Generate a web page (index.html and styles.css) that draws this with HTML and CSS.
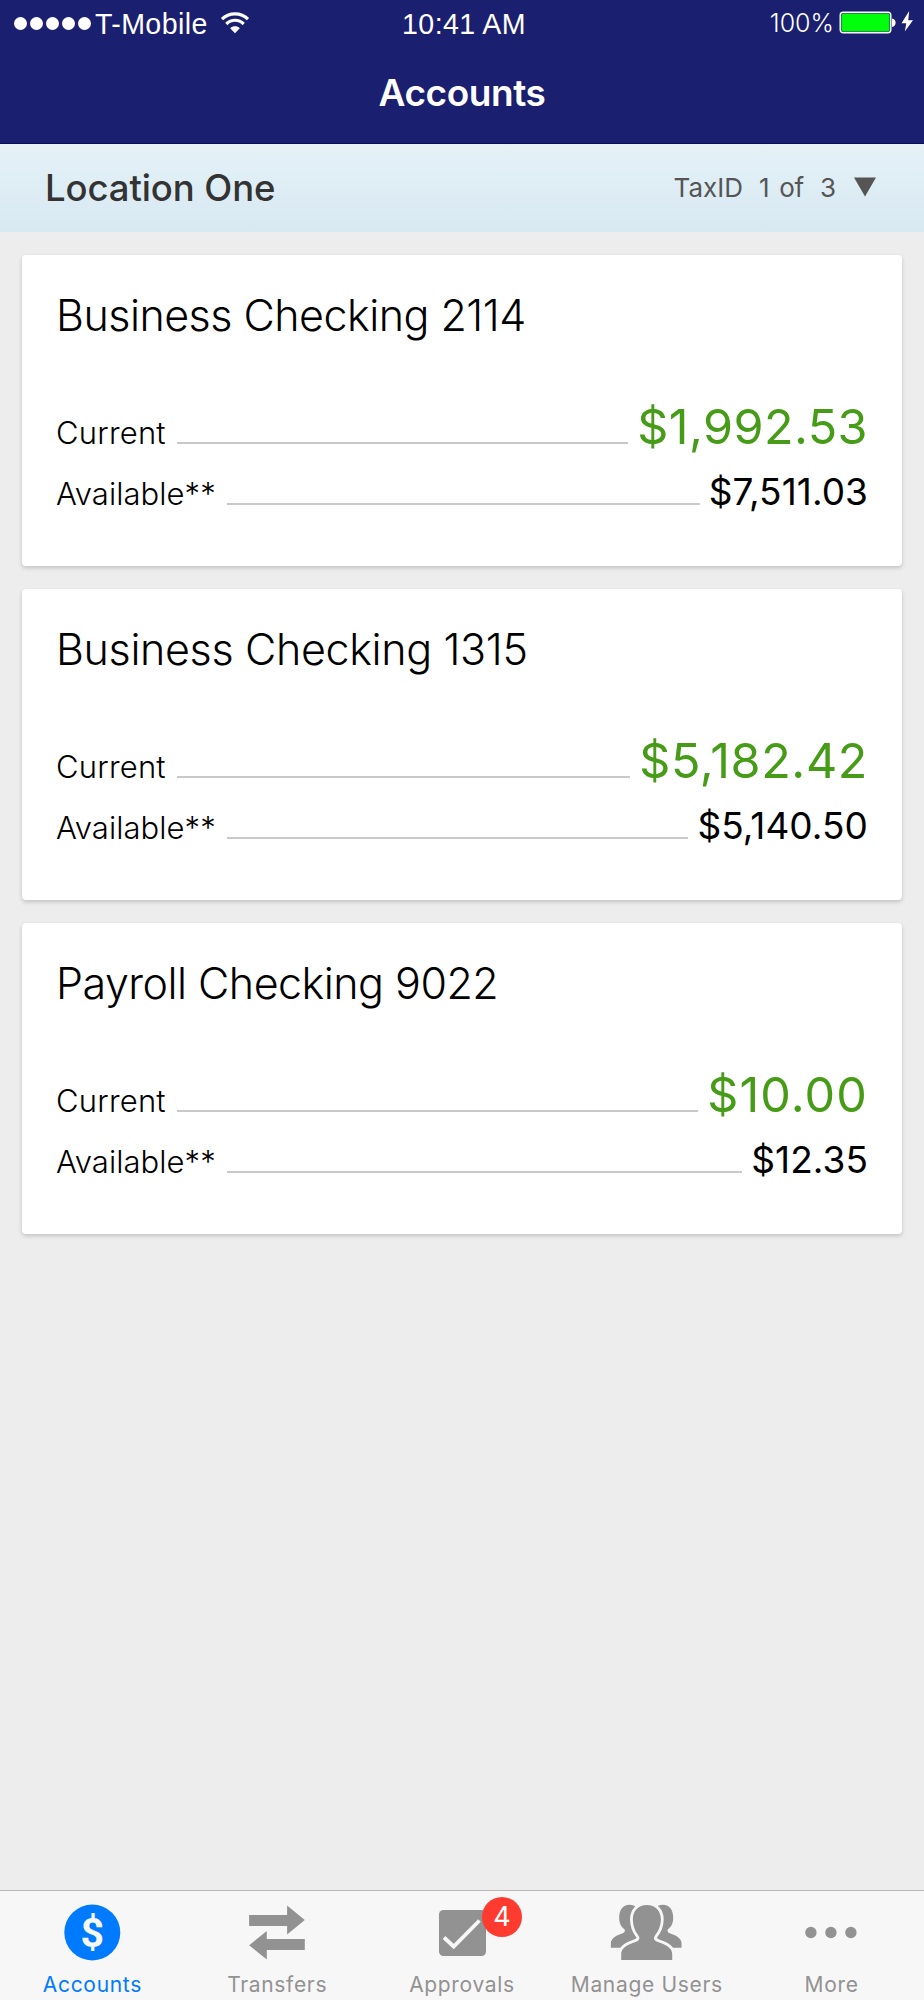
FILE: index.html
```html
<!DOCTYPE html>
<html lang="en">
<head>
<meta charset="utf-8">
<title>Accounts</title>
<link rel="stylesheet" href="styles.css">
</head>
<body>
<div class="app">
  <header class="header">
    <div class="status">
      <div class="status-left">
        <div class="signal"><i></i><i></i><i></i><i></i><i></i></div>
        <span class="carrier">T-Mobile</span>
        <svg class="wifi" width="30" height="24" viewBox="0 0 30 24" fill="none" stroke="#fff" stroke-width="3.2">
          <path d="M2 8.2C9 1 21 1 28 8.2"/>
          <path d="M6.3 13C11.3 8 18.7 8 23.7 13"/>
          <path d="M10.2 17.2C12.8 14.6 17.2 14.6 19.8 17.2L15 22.2Z" fill="#fff" stroke="none"/>
        </svg>
      </div>
      <div class="clock">10:41 AM</div>
      <div class="status-right">
        <span class="percent">100%</span>
        <svg class="battery" width="76" height="26" viewBox="0 0 76 26">
          <rect x="1.2" y="2.2" width="50.6" height="20.6" rx="3" fill="none" stroke="#fff" stroke-width="1.4"/>
          <rect x="2.6" y="3.6" width="47.8" height="17.8" rx="1.5" fill="#00ff0a" stroke="#2b9447" stroke-width="0.8"/>
          <path d="M53 8.500C57.800 9 57.800 16.500 53 17Z" fill="#fff"/>
          <path d="M70.200 1L62.500 13.200H67.300L65.800 21.500L74 10.300H69.200Z" fill="#fff"/>
        </svg>
      </div>
    </div>
    <h1 class="title">Accounts</h1>
  </header>

  <section class="location">
    <h2 class="location-name">Location One</h2>
    <div class="tax"><span>TaxID</span><span class="position">1 of</span><span>3</span>
      <svg width="22" height="20" viewBox="0 0 22 20"><path d="M0 .5H22L11 19.500Z" fill="#555"/></svg>
    </div>
  </section>

  <main class="cards">
    <article class="card">
      <h3 class="card-title">Business Checking 2114</h3>
      <div class="row current"><span class="label">Current</span><span class="rule"></span><span class="amount snug">$1,992.53</span></div>
      <div class="row available"><span class="label">Available**</span><span class="rule"></span><span class="amount">$7,511.03</span></div>
    </article>
    <article class="card">
      <h3 class="card-title roomy">Business Checking 1315</h3>
      <div class="row current"><span class="label">Current</span><span class="rule"></span><span class="amount">$5,182.42</span></div>
      <div class="row available"><span class="label">Available**</span><span class="rule"></span><span class="amount">$5,140.50</span></div>
    </article>
    <article class="card">
      <h3 class="card-title">Payroll Checking 9022</h3>
      <div class="row current"><span class="label">Current</span><span class="rule"></span><span class="amount roomy">$10.00</span></div>
      <div class="row available"><span class="label">Available**</span><span class="rule"></span><span class="amount">$12.35</span></div>
    </article>
  </main>

  <nav class="tabs">
    <a class="tab active">
      <svg class="icon" viewBox="0 0 80 80"><circle cx="40.300" cy="41.500" r="28" fill="currentColor"/><text class="dollar" x="40.300" y="56" text-anchor="middle">$</text></svg>
      <span>Accounts</span>
    </a>
    <a class="tab">
      <svg class="icon" viewBox="0 0 80 80" fill="currentColor"><path d="M12.100 24H50.100V14.500L67.800 29L50.100 43.500V35H12.100Z"/><path d="M67.800 48H29.800V40L12.100 54.200L29.800 68.500V59H67.800Z"/></svg>
      <span>Transfers</span>
    </a>
    <a class="tab">
      <svg class="icon" viewBox="0 0 80 80"><rect x="17" y="19" width="47" height="46" rx="4.500" fill="currentColor"/><path d="M22 46.500L31.700 55.500L57.500 29.500" fill="none" stroke="#f7f7f7" stroke-width="3.800"/></svg>
      <b class="badge">4</b>
      <span>Approvals</span>
    </a>
    <a class="tab">
      <svg class="icon" viewBox="0 0 80 80" fill="currentColor"><g transform="translate(-6.800 4) scale(.33333)">
        <path d="M104 33C76 22 57 38 57 68C57 86 64 96 72 102C77 108 72 114 64 116C40 124 32 134 32 145V158H120Z"/>
        <path transform="translate(276 0) scale(-1 1)" d="M104 33C76 22 57 38 57 68C57 86 64 96 72 102C77 108 72 114 64 116C40 124 32 134 32 145V158H120Z"/>
        <path class="front" d="M140 30C115 30 98 47 98 73C98 94 106 111 115 122C121 131 116 137 106 141C77 151 63 160 63 178V195H216V178C216 160 202 151 173 141C163 137 158 131 164 122C173 111 182 94 182 73C182 47 165 30 140 30Z"/>
      </g></svg>
      <span>Manage Users</span>
    </a>
    <a class="tab">
      <svg class="icon" viewBox="0 0 80 80" fill="currentColor"><circle cx="38.900" cy="41.500" r="5.700"/><circle cx="18.900" cy="41.500" r="5.700"/><circle cx="58.900" cy="41.500" r="5.700"/></svg>
      <span>More</span>
    </a>
  </nav>
</div>
</body>
</html>
```
FILE: styles.css
```css
* { box-sizing: border-box; }
body { margin: 0; background: #ededed; font-family: Inter, "Liberation Sans", sans-serif; color: #000; }
h1, h2, h3 { margin: 0; }
svg { display: block; flex: none; }
.app { width: 924px; height: 2000px; display: flex; flex-direction: column; overflow: hidden; }

.header { height: 144px; background: #1b1f6f; color: #fff; border-bottom: 1px solid #0c0d60; }
.status { height: 48px; display: grid; grid-template-columns: 1fr auto 1fr; align-items: start; }
.status-left { display: flex; padding-left: 14px; }
.signal { display: flex; gap: 3px; padding-top: 16.500px; }
.signal i { width: 13px; height: 13px; border-radius: 50%; background: #fff; }
.carrier, .clock { font: 400 28.600px/34px "Liberation Sans", Arial, sans-serif; letter-spacing: 0.380px; padding-top: 7px; }
.carrier { margin-left: 4px; }
.wifi { margin: 11px 0 0 12px; }
.clock { padding-left: 4px; }
.status-right { display: flex; justify-content: flex-end; padding-right: 9px; }
.percent { font-size: 25px; font-weight: 300; line-height: 30px; padding-top: 8px; margin-right: 5px; }
.battery { margin-top: 10px; }
.title { font-size: 37px; font-weight: 600; line-height: 46px; letter-spacing: -0.430px; text-align: center; padding-top: 22px; }

.location { height: 88px; padding: 0 48px 0 45px; display: flex; justify-content: space-between; background: linear-gradient(#e5f1f7, #d8e9f2); }
.location-name { font-size: 36.500px; font-weight: 500; line-height: 46px; letter-spacing: -0.100px; color: #333; padding-top: 21px; }
.tax { display: flex; align-items: flex-start; font-size: 26px; line-height: 32px; color: #555; padding-top: 28px; }
.tax span + span { margin-left: 16px; }
.tax .position { word-spacing: 3px; letter-spacing: -0.300px; }
.tax svg { margin: 5px 0 0 18px; }

.cards { flex: 1; display: flex; flex-direction: column; gap: 23px; padding: 23px 22px 0; }
.card { height: 311px; padding: 34px 34px 0 34px; background: #fff; border-radius: 4px; box-shadow: 0 2px 4px rgba(0, 0, 0, 0.18); }
.card-title { font-size: 43px; font-weight: 300; line-height: 52px; letter-spacing: -0.520px; }
.card-title.roomy { letter-spacing: -0.350px; }
.row { display: flex; align-items: baseline; }
.label { font-size: 31px; font-weight: 300; letter-spacing: 0.050px; }
.rule { flex: 1; height: 2.400px; margin: 0 9px 0 11px; background: #c9c9c9; }
.current { height: 60px; line-height: 60px; margin-top: 56px; }
.current .label { letter-spacing: 0.200px; }
.current .amount { font-size: 48.500px; color: #469c17; letter-spacing: 0.600px; }
.current .snug { letter-spacing: 0.420px; }
.current .roomy { letter-spacing: 1.100px; }
.available { height: 48px; line-height: 48px; margin-top: 11px; }
.available .amount { font-size: 37px; letter-spacing: 0.060px; }

.tabs { height: 110px; display: grid; grid-template-columns: repeat(5, 1fr); background: #f7f7f7; border-top: 1px solid #b8b8b8; }
.tab { position: relative; display: flex; flex-direction: column; align-items: center; color: #929292; font-size: 21px; line-height: 28px; letter-spacing: 0.680px; }
.tab.active { color: #007aff; }
.icon { width: 80px; height: 80px; }
.dollar { font: 700 41px Roboto, sans-serif; fill: #f7f7f7; letter-spacing: 0; }
.front { stroke: #f7f7f7; stroke-width: 17px; paint-order: stroke; }
.badge { position: absolute; top: 6px; left: 112.500px; width: 40px; height: 40px; border-radius: 50%; background: #ff3b30; color: #fff; font-size: 27px; font-weight: 400; line-height: 40px; letter-spacing: 0; text-align: center; }
```
